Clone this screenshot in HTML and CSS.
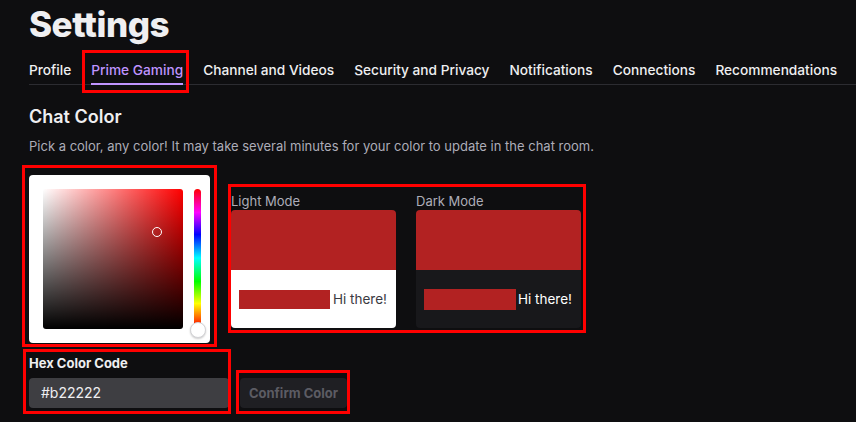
FILE: index.html
```html
<!DOCTYPE html>
<html>
<head>
<meta charset="utf-8">
<link rel="stylesheet" href="styles.css">
</head>
<body>
<div class="page">
  <h1 class="title">Settings</h1>
  <nav class="tabs">
    <a class="tab">Profile</a>
    <a class="tab active mark mark-tab">Prime Gaming</a>
    <a class="tab">Channel and Videos</a>
    <a class="tab">Security and Privacy</a>
    <a class="tab">Notifications</a>
    <a class="tab">Connections</a>
    <a class="tab">Recommendations</a>
  </nav>
  <h2 class="section-title">Chat Color</h2>
  <p class="desc">Pick a color, any color! It may take several minutes for your color to update in the chat room.</p>
  <div class="picker-row">
    <div class="picker mark mark-picker">
      <div class="sat">
        <span class="sat-cursor"></span>
      </div>
      <div class="hue">
        <span class="hue-thumb"></span>
      </div>
    </div>
    <div class="previews mark mark-previews">
      <div class="preview">
        <div class="preview-label">Light Mode</div>
        <div class="preview-card light">
          <div class="preview-top"></div>
          <div class="preview-bottom">
            <span class="name-bar"></span><span class="msg">Hi there!</span>
          </div>
        </div>
      </div>
      <div class="preview">
        <div class="preview-label">Dark Mode</div>
        <div class="preview-card dark">
          <div class="preview-top"></div>
          <div class="preview-bottom">
            <span class="name-bar"></span><span class="msg">Hi there!</span>
          </div>
        </div>
      </div>
    </div>
  </div>
  <div class="hex-row">
    <div class="hex mark mark-hex">
      <label class="hex-label">Hex Color Code</label>
      <div class="hex-input">#b22222</div>
    </div>
    <button class="confirm mark mark-confirm">Confirm Color</button>
  </div>
</div>
</body>
</html>
```

FILE: styles.css
```css
html, body {
  margin: 0;
  padding: 0;
  background: #0e0e10;
  color: #efeff1;
  font-family: Inter, "Noto Sans", "Liberation Sans", sans-serif;
  width: 856px;
  height: 422px;
  overflow: hidden;
}

.page {
  padding: 0 0 0 29px;
}

.mark { position: relative; }
.mark::after {
  content: "";
  position: absolute;
  border: 3px solid #ff0000;
  pointer-events: none;
}

.title {
  margin: 0;
  padding-top: 2px;
  font-size: 35px;
  font-weight: 800;
  line-height: 44px;
  letter-spacing: -0.5px;
  color: #efeff1;
}

.tabs {
  display: flex;
  gap: 20px;
  margin-top: 15px;
  border-bottom: 1px solid #2c2c31;
  height: 23px;
}
.tab {
  font-size: 13.7px;
  font-weight: 500;
  line-height: 18px;
  height: 24px;
  box-sizing: border-box;
  color: #efeff1;
  white-space: nowrap;
}
.tab.active {
  color: #bf94ff;
  border-bottom: 2px solid #bf94ff;
}
.mark-tab::after {
  left: -9px; right: -6px; top: -11px; bottom: -10px;
}

.section-title {
  margin: 20px 0 0;
  font-size: 18px;
  font-weight: 600;
  line-height: 24px;
}

.desc {
  margin: 8px 0 0;
  font-size: 13px;
  line-height: 18px;
  color: #adadb8;
}

.picker-row {
  display: flex;
  align-items: flex-start;
  gap: 21px;
  margin-top: 20px;
}

.picker {
  width: 181px;
  height: 168px;
  box-sizing: border-box;
  background: #ffffff;
  border-radius: 4px;
  padding: 14px 9px 14px 14px;
  display: flex;
  gap: 11px;
}
.mark-picker::after {
  left: -7px; right: -7px; top: -10px; bottom: -4px;
}

.sat {
  position: relative;
  width: 140px;
  height: 140px;
  border-radius: 3px;
  background:
    linear-gradient(to top, #000 0%, rgba(0,0,0,0) 100%),
    linear-gradient(to right, #fff 0%, rgba(255,255,255,0) 100%),
    #ff0000;
}
.sat-cursor {
  position: absolute;
  left: 109px;
  top: 38px;
  width: 8px;
  height: 8px;
  border: 1.5px solid #fff;
  border-radius: 50%;
}

.hue {
  position: relative;
  width: 7px;
  height: 138px;
  border-radius: 4px;
  background: linear-gradient(to bottom, #ff0000 0%, #ff00ff 17%, #0000ff 33%, #00ffff 50%, #00ff00 67%, #ffff00 83%, #ff0000 100%);
}
.hue-thumb {
  position: absolute;
  left: -4px;
  top: 133px;
  width: 14px;
  height: 14px;
  border-radius: 50%;
  background: #fff;
  border: 1px solid #d3d3d6;
  box-shadow: 0 1px 2px rgba(0,0,0,0.2);
}

.previews {
  display: flex;
  gap: 20px;
  margin-top: 17px;
}
.mark-previews::after {
  left: -3px; right: -5px; top: -8px; bottom: -5px;
}

.preview-label {
  font-size: 13px;
  line-height: 18px;
  color: #adadb8;
}

.preview-card {
  width: 165px;
  height: 118px;
  border-radius: 4px;
  overflow: hidden;
}
.preview-top {
  height: 60px;
  background: #b22222;
}
.preview-bottom {
  height: 58px;
  display: flex;
  align-items: center;
  padding-left: 8px;
  box-sizing: border-box;
}
.light .preview-bottom { background: #ffffff; color: #0e0e10; }
.dark .preview-bottom { background: #18181b; color: #ffffff; }

.name-bar {
  display: inline-block;
  width: 91px;
  height: 19px;
  background: #b22222;
  margin-right: 3px;
}
.dark .name-bar { width: 92px; height: 21px; margin-right: 2px; }

.msg {
  font-size: 13.5px;
  line-height: 18px;
}
.light .msg { color: #3a3a42; }
.dark .msg { color: #ffffff; font-size: 13.5px; }

.hex-row {
  display: flex;
  align-items: flex-end;
  gap: 11px;
  margin-top: 11px;
}

.hex-label {
  display: block;
  font-size: 13px;
  font-weight: 700;
  line-height: 18px;
  color: #efeff1;
  margin-bottom: 6px;
}
.mark-hex::after {
  left: -6px; right: -2px; top: -5px; bottom: -6px;
}

.hex-input {
  width: 200px;
  height: 30px;
  box-sizing: border-box;
  background: #3e3e42;
  border-radius: 4px;
  padding-left: 12px;
  font-size: 14px;
  line-height: 30px;
  color: #efeff1;
}

.confirm {
  width: 107px;
  height: 30px;
  border: 0;
  border-radius: 4px;
  background: #1f1f23;
  color: #5c5c63;
  font-family: inherit;
  font-size: 13px;
  font-weight: 700;
  padding: 0;
}
.mark-confirm::after {
  left: -4px; right: -3px; top: -8px; bottom: -6px;
}
```
